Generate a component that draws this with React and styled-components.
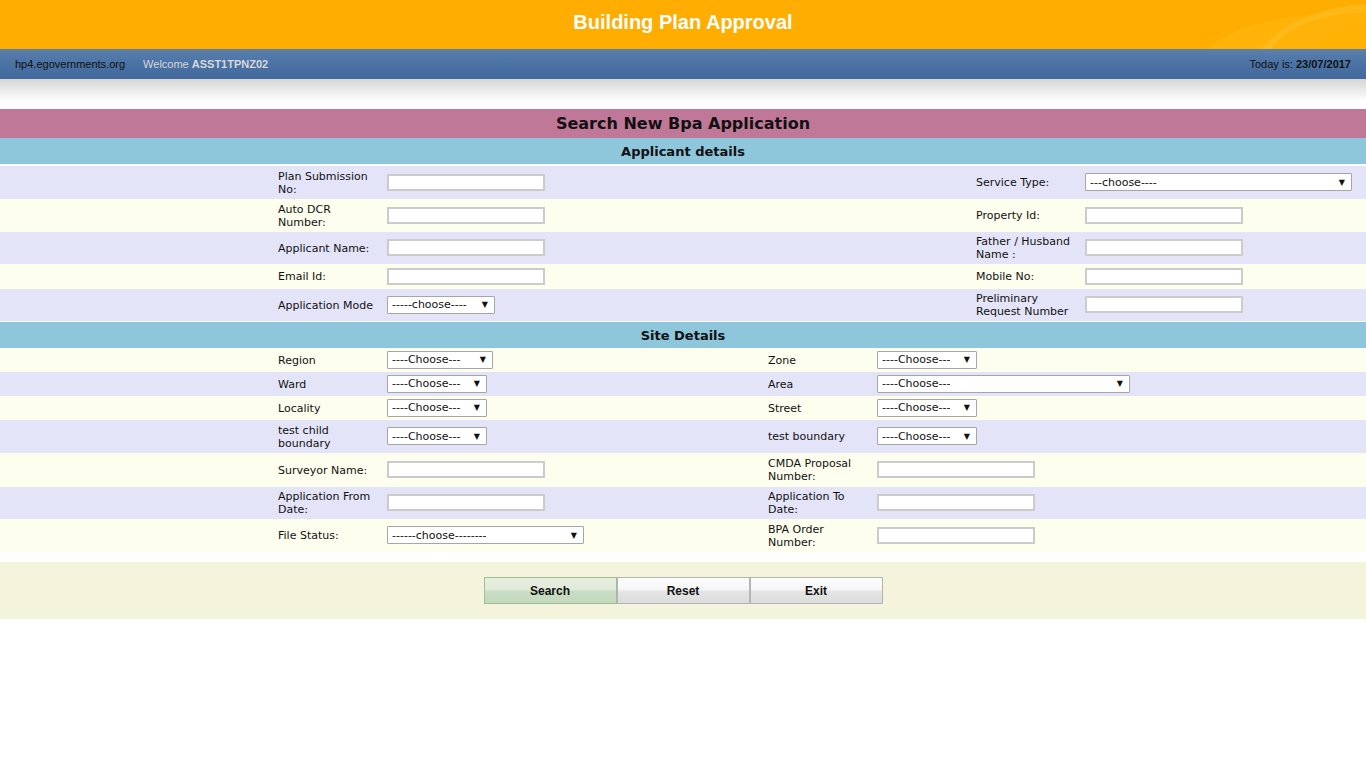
import styled, { createGlobalStyle } from "styled-components";

const Global = createGlobalStyle`
  html, body {
    margin: 0;
    padding: 0;
    background: #fff;
  }
  * { box-sizing: border-box; }
`

const labelFont = `"DejaVu Sans", Verdana, Tahoma, sans-serif`

const Header = styled.div`
  position: relative;
  height: 49px;
  background: #ffad00;
  display: flex;
  align-items: center;
  justify-content: center;
  overflow: hidden;
`

const Title = styled.h1`
  margin: 0 0 4px;
  color: #fff;
  font: bold 20px "Liberation Sans", Arial, sans-serif;
`

const Swoosh = styled.svg`
  position: absolute;
  right: 0;
  top: 0;
`

const NavBar = styled.div`
  height: 30px;
  background: linear-gradient(#5b80ad, #4a72a4 50%, #41699c);
  display: flex;
  align-items: center;
  padding: 0 15px;
  font: 11px "Liberation Sans", Arial, sans-serif;
  color: #111;
`

const Welcome = styled.span`
  color: #d8d8d8;
  margin-left: 18px;
  b { font-weight: bold; }
`

const Today = styled.span`
  margin-left: auto;
`

const Shade = styled.div`
  height: 30px;
  background: linear-gradient(#d6d6d6, #fff 75%);
`

const PageTitle = styled.div`
  height: 29px;
  background: #c07898;
  display: flex;
  align-items: center;
  justify-content: center;
  font: bold 16px ${labelFont};
  color: #111;
`

const SectionBar = styled.div`
  box-sizing: content-box;
  height: 26px;
  background: #8ec6dc;
  display: flex;
  align-items: center;
  justify-content: center;
  font: bold 13px ${labelFont};
  color: #111;
  border-bottom: ${({line}) => (line ? '2px solid #fff' : 'none')};
  border-top: ${({top}) => (top ? '1px solid #fff' : 'none')};
`

const Row = styled.div`
  display: grid;
  grid-template-columns: ${({cols}) => cols};
  align-items: center;
  height: ${({h}) => h}px;
  background: ${({alt}) => (alt ? '#fefeee' : '#e4e4f8')};
`

const Label = styled.div`
  font: 11px/13px ${labelFont};
  color: #111;
  max-width: 101px;
`

const TextInput = styled.input`
  width: 158px;
  height: 17px;
  margin-top: -1px;
  border: 2px solid #cbcbcb;
  background: #fff;
  padding: 0 2px;
  outline: none;
`

const Select = styled.div`
  width: ${({w}) => w}px;
  height: 18px;
  margin-top: -1px;
  border: 1px solid #a6a6a6;
  border-radius: 1px;
  background: #fff;
  display: flex;
  align-items: center;
  justify-content: space-between;
  padding: 0 6px 0 4px;
  font: 11px ${labelFont};
  color: #111;
  &::after {
    content: "▼";
    font: 8px "DejaVu Sans", sans-serif;
    color: #111;
  }
`

const Cell = styled.div`
  display: flex;
  align-items: center;
`

const Spacer = styled.div`
  height: 10px;
`

const ButtonBar = styled.div`
  height: 57px;
  background: #f4f4dc;
  display: flex;
  justify-content: center;
  align-items: center;
`

const Btn = styled.button`
  width: 133px;
  height: 27px;
  font: bold 12px "Liberation Sans", Arial, sans-serif;
  color: #111;
  cursor: pointer;
  border: 1px solid ${({primary}) => (primary ? '#9cc094' : '#b4b4b4')};
  background: ${({primary}) =>
    primary
      ? 'linear-gradient(#e6eddf 0%, #e1ead9 45%, #c8dcc2 55%, #c3d9bd 100%)'
      : 'linear-gradient(#fdfdfd 0%, #f6f6f6 45%, #e4e4e4 55%, #dcdcdc 100%)'};
`

const APP_COLS = '278px 109px 589px 109px 1fr'
const SITE_COLS = '278px 109px 381px 109px 1fr'

const applicantRows = [
  { h: 33, left: ['Plan Submission No:', { input: true }], right: ['Service Type:', { select: '---choose----', w: 267 }] },
  { h: 33, left: ['Auto DCR Number:', { input: true }], right: ['Property Id:', { input: true }] },
  { h: 32, left: ['Applicant Name:', { input: true }], right: ['Father / Husband Name :', { input: true }] },
  { h: 25, left: ['Email Id:', { input: true }], right: ['Mobile No:', { input: true }] },
  { h: 32, left: ['Application Mode', { select: '-----choose----', w: 108 }], right: ['Preliminary Request Number', { input: true }] },
]

const siteRows = [
  { h: 24, left: ['Region', { select: '----Choose---', w: 106 }], right: ['Zone', { select: '----Choose---', w: 100 }] },
  { h: 24, left: ['Ward', { select: '----Choose---', w: 100 }], right: ['Area', { select: '----Choose---', w: 253 }] },
  { h: 24, left: ['Locality', { select: '----Choose---', w: 100 }], right: ['Street', { select: '----Choose---', w: 100 }] },
  { h: 33, left: ['test child boundary', { select: '----Choose---', w: 100 }], right: ['test boundary', { select: '----Choose---', w: 100 }] },
  { h: 34, left: ['Surveyor Name:', { input: true }], right: ['CMDA Proposal Number:', { input: true }] },
  { h: 32, left: ['Application From Date:', { input: true }], right: ['Application To Date:', { input: true }] },
  { h: 33, left: ['File Status:', { select: '------choose--------', w: 197 }], right: ['BPA Order Number:', { input: true }] },
]

const Field = ({ f }) => (
  <Cell>
    {f.input ? <TextInput type="text" /> : <Select w={f.w}>{f.select}</Select>}
  </Cell>
)

const FormRow = ({ row, cols, alt }) => (
  <Row cols={cols} h={row.h} alt={alt}>
    <div />
    <Label>{row.left[0]}</Label>
    <Field f={row.left[1]} />
    <Label>{row.right[0]}</Label>
    <Field f={row.right[1]} />
  </Row>
)

const App = () => {
  return (
    <>
      <Global />
      <Header>
        <Title>Building Plan Approval</Title>
        <Swoosh width="200" height="49" viewBox="0 0 200 49">
          <path d="M40 49 C70 25 120 12 200 12 L200 49 Z" fill="#ffb80e" opacity="0.6" />
          <path d="M95 49 C120 20 160 6 200 4 L200 12 C150 14 120 28 105 49 Z" fill="#ffc12a" opacity="0.5" />
          <path d="M150 49 C165 30 185 22 200 20 L200 49 Z" fill="#ffb000" opacity="0.5" />
        </Swoosh>
      </Header>
      <NavBar>
        <span>hp4.egovernments.org</span>
        <Welcome>Welcome <b>ASST1TPNZ02</b></Welcome>
        <Today>Today is: <b>23/07/2017</b></Today>
      </NavBar>
      <Shade />
      <PageTitle>Search New Bpa Application</PageTitle>
      <SectionBar line>Applicant details</SectionBar>
      {applicantRows.map((r, i) => (
        <FormRow key={i} row={r} cols={APP_COLS} alt={i % 2 === 1} />
      ))}
      <SectionBar top>Site Details</SectionBar>
      {siteRows.map((r, i) => (
        <FormRow key={i} row={r} cols={SITE_COLS} alt={i % 2 === 0} />
      ))}
      <Spacer />
      <ButtonBar>
        <Btn primary>Search</Btn>
        <Btn>Reset</Btn>
        <Btn>Exit</Btn>
      </ButtonBar>
    </>
  )
}

export default App
